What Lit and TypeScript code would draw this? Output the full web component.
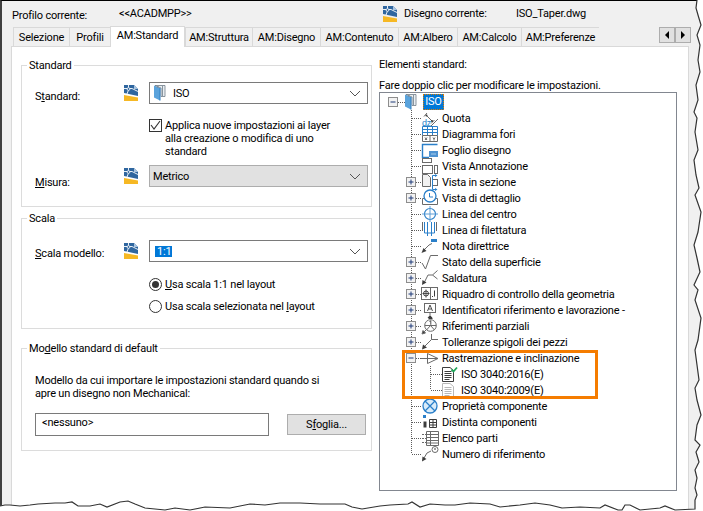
import { LitElement, html, css, svg } from "lit";
import { customElement } from "lit/decorators.js";

const B = "#2a7fc9";
const G = "#6a6a6a";
const D = "#3c3c3c";

const layerIcon = html`<svg class="layer" width="14" height="16" viewBox="0 0 14 16">
  <path d="M0 0H10L14 4V11L0 8Z" fill="#2f669f"/>
  <path d="M0 10L14 12.5V16H0Z" fill="#f6b824"/>
  <path d="M4.5 0V5M0 3.5H8L14 6.5M4.5 5L3 9" stroke="#fff" stroke-width=".9" fill="none"/>
  <circle cx="4.5" cy="4" r="1.4" fill="#2f669f" stroke="#fff" stroke-width=".8"/>
  <path d="M10 0V4H14Z" fill="#a9c4df"/>
</svg>`;

const bookIcon = (w = 12, h = 16) => html`<svg class="book" width=${w} height=${h} viewBox="0 0 12 16">
  <path d="M0 .5L6 3V15.5L0 12.5Z" fill="#5aa3dc"/>
  <path d="M1 .5H11V11.5H7V3Z" fill="#e9eef2" stroke="#6f7c88" stroke-width=".8"/>
  <path d="M4 1V3M8.5 1V11" stroke="#6f7c88" stroke-width=".8"/>
  <path d="M6 3V15.5" stroke="#2f7fc1" stroke-width="1"/>
</svg>`;

const doc = (c: string, check: boolean) => svg`
  <path d="M.5 1.5H8L11.5 4.5V15.5H.5Z" fill="#fff" stroke=${c}/>
  <path d="M2.5 5.5H9.5M2.5 7.5H9.5M2.5 9.5H9.5M2.5 11.5H9.5M2.5 13.5H7.5" stroke=${c}/>
  ${check ? svg`<path d="M9.5 3.5L11.5 5.5L15 1.5" stroke="#1ea55a" stroke-width="1.8" fill="none"/>` : ""}`;

const icons: Record<string, unknown> = {
  quota: svg`
    <path d="M5 5L12 12" stroke=${G}/><path d="M3 6.5L6 3M10 13.5L13.5 10" stroke=${G}/>
    <circle cx="5.5" cy="5.5" r="1" fill=${D}/><circle cx="11" cy="11" r="1" fill=${D}/>
    <text x="1" y="16" font-size="9" font-family="Liberation Sans, sans-serif" fill=${B}>dz</text>
    <path d="M10 16L17 9" stroke=${G}/>`,
  diagramma: svg`
    <path d="M1.5 .5H16.5V9.5H1.5ZM1.5 3.5H16.5M1.5 6.5H16.5M6.5 .5V9.5M11.5 .5V9.5" stroke=${B} fill="#fff"/>
    <path d="M1.5 9.5H16.5V15.5H1.5ZM9 9.5V15.5" stroke=${G} fill="#fff"/>
    <path d="M4 11.5L6 14M6 11.5L4 14M12 11.5L13 13L14 11.5M13 13V14.5" stroke=${D} stroke-width=".8" fill="none"/>`,
  foglio: svg`
    <path d="M16.5 2.5H1.5V15.5H8" stroke=${B} fill="none" stroke-width="1.4"/>
    <rect x="8" y="9" width="9" height="6" fill="#4f93d2"/>
    <path d="M10 12H15" stroke="#a9cdea"/>`,
  annotazione: svg`
    <rect x="1.5" y=".5" width="9" height="4" fill="#fff" stroke=${G}/>
    <rect x="1.5" y="7.5" width="10" height="8" fill="#fff" stroke=${G}/>
    <rect x="13.5" y="7.5" width="3" height="8" fill="#fff" stroke=${G}/>`,
  sezione: svg`
    <path d="M1.5 .5H6.5L9.5 3.5V12.5H1.5Z" fill="#f1f1f1" stroke=${G}/>
    <rect x="11.5" y="5.5" width="5" height="6" fill="#fff" stroke=${G}/>
    <path d="M14.5 1.5H11.5V15.5H14.5" stroke=${B} fill="none"/><path d="M14 0V3L16.5 1.5Z M14 14V17L16.5 15.5Z" fill=${B}/>`,
  dettaglio: svg`
    <path d="M3.5 8.5H1.5V14.5H16.5V8.5H14" stroke=${G} fill="none"/>
    <circle cx="9" cy="6" r="6" fill="#fff" stroke=${B} stroke-width="1.3"/>
    <path d="M8.5 3V7H12" stroke=${B} fill="none"/>`,
  centro: svg`
    <circle cx="9" cy="8" r="5.5" fill="#fff" stroke=${B} stroke-width="1.2"/>
    <path d="M9 0V16M1 8H17" stroke="#5e9ed6"/>`,
  filettatura: svg`
    <path d="M3.5 0V11H13.5V0" stroke=${B} fill="none"/>
    <path d="M6.5 0V14M10.5 0V14" stroke=${B}/>
    <path d="M1.5 0V9M15.5 0V9" stroke=${G}/>`,
  nota: svg`
    <rect x="10" y="1" width="6" height="3" fill=${B}/>
    <path d="M2 13L8 7L11 5.5" stroke=${G} fill="none"/>
    <path d="M0.5 15L2.5 10L5.5 13Z" fill=${D}/>`,
  stato: svg`<path d="M1 9L4.5 15L9.5 1.5H17" stroke=${G} fill="none"/>`,
  saldatura: svg`
    <path d="M3 13L7 5H11.5M16.5 .5L11.5 5L16.5 9" stroke=${G} fill="none"/>
    <path d="M1 15L1.5 10L5.5 12.5Z" fill=${D}/>`,
  riquadro: svg`
    <rect x=".5" y="1.5" width="16" height="12" fill="#fff" stroke=${G}/>
    <path d="M9.5 1.5V13.5" stroke=${G}/>
    <circle cx="5" cy="7.5" r="2.5" fill="none" stroke=${D}/>
    <path d="M5 3.5V11.5M1.5 7.5H8.5" stroke=${D} stroke-width=".9"/>
    <path d="M13.5 4.5V10.5" stroke=${D}/><rect x="11" y="10" width="1" height="1" fill=${D}/>`,
  identificatori: svg`
    <rect x="3.5" y="1.5" width="11" height="9" fill="#fff" stroke=${G}/>
    <path d="M6.5 9L9 3L11.5 9M7.5 7H10.5" stroke=${D} stroke-width=".9" fill="none"/>
    <path d="M9 10.5V13" stroke=${G}/><path d="M6.5 16L9 13L11.5 16Z" fill=${D}/>`,
  riferimenti: svg`
    <circle cx="9.5" cy="7.5" r="5.8" fill="#fff" stroke=${G}/>
    <path d="M3.8 7.5H15.3M9.5 7.5L5.5 12M9.5 7.5L13.5 12" stroke=${G}/>
    <path d="M8.5 3.5L9.8 2.8V6.8" stroke=${D} fill="none" stroke-width=".9"/>
    <path d="M7 1L9.5 -1.5L12 1Z" fill=${D}/>
    <path d="M1 16L2 12.5L4.5 15Z M3 14L5.5 11.5" fill=${D} stroke=${G}/>`,
  tolleranze: svg`
    <path d="M10.5 0V5.5H17M10.5 5.5L4 12" stroke=${G} fill="none"/>
    <path d="M1 15.5L2 10.5L6 13.5Z" fill=${D}/>`,
  rastremazione: svg`
    <path d="M0 8.5H17M6.5 3.5L17 8.5L6.5 13.5Z" stroke=${G} fill="#fff"/>
    <path d="M0 8.5H6" stroke=${G}/>`,
  doc1: doc(D, true),
  doc2: doc("#b8b8b8", false),
  proprieta: svg`
    <circle cx="9" cy="8" r="7" fill="#d9ecfa" stroke=${B} stroke-width="1.3"/>
    <path d="M4 3L14 13M14 3L4 13" stroke=${B} stroke-width="1.3"/>`,
  distinta: svg`
    <rect x="2" y="1" width="3" height="3" fill=${B}/>
    <path d="M2.5 7.5H5.5V13.5H2.5Z" fill=${D}/>
    <path d="M8.5 5.5H15.5V13.5H8.5ZM8.5 8.5H15.5M8.5 11H15.5M12 5.5V13.5" stroke=${D} fill="#fff"/>`,
  elenco: svg`
    <path d="M5.5 1.5H17.5V15.5H5.5ZM5.5 4.5H17.5M5.5 7.5H17.5M5.5 10.5H17.5M5.5 13H17.5M9.5 1.5V15.5" stroke=${G} fill="#fff"/>
    <path d="M1 4.5H5M1 8.5H5M1 12.5H5" stroke=${G} stroke-dasharray="2 1"/>`,
  numero: svg`
    <path d="M3 12L6 7L10 5" stroke=${G} fill="none"/>
    <path d="M1 15.5L1.5 10.5L5.5 13Z" fill=${D}/>
    <circle cx="14" cy="3.5" r="3" fill="#fff" stroke=${G}/>
    <path d="M14 2V4" stroke=${D}/>`,
};

type Row = { level: number; exp?: string; icon: string; text: string; last?: boolean };

const rows: Row[] = [
  { level: 1, icon: "quota", text: "Quota" },
  { level: 1, icon: "diagramma", text: "Diagramma fori" },
  { level: 1, icon: "foglio", text: "Foglio disegno" },
  { level: 1, icon: "annotazione", text: "Vista Annotazione" },
  { level: 1, exp: "+", icon: "sezione", text: "Vista in sezione" },
  { level: 1, exp: "+", icon: "dettaglio", text: "Vista di dettaglio" },
  { level: 1, icon: "centro", text: "Linea del centro" },
  { level: 1, icon: "filettatura", text: "Linea di filettatura" },
  { level: 1, icon: "nota", text: "Nota direttrice" },
  { level: 1, exp: "+", icon: "stato", text: "Stato della superficie" },
  { level: 1, exp: "+", icon: "saldatura", text: "Saldatura" },
  { level: 1, exp: "+", icon: "riquadro", text: "Riquadro di controllo della geometria" },
  { level: 1, exp: "+", icon: "identificatori", text: "Identificatori riferimento e lavorazione -" },
  { level: 1, exp: "+", icon: "riferimenti", text: "Riferimenti parziali" },
  { level: 1, exp: "+", icon: "tolleranze", text: "Tolleranze spigoli dei pezzi" },
  { level: 1, exp: "-", icon: "rastremazione", text: "Rastremazione e inclinazione" },
  { level: 2, icon: "doc1", text: "ISO 3040:2016(E)" },
  { level: 2, icon: "doc2", text: "ISO 3040:2009(E)", last: true },
  { level: 1, icon: "proprieta", text: "Proprietà componente" },
  { level: 1, icon: "distinta", text: "Distinta componenti" },
  { level: 1, icon: "elenco", text: "Elenco parti" },
  { level: 1, icon: "numero", text: "Numero di riferimento", last: true },
];

const tabs: [string, number][] = [
  ["Selezione", 56], ["Profili", 41], ["AM:Standard", 75], ["AM:Struttura", 67], ["AM:Disegno", 68],
  ["AM:Contenuto", 78], ["AM:Albero", 59], ["AM:Calcolo", 64], ["AM:Preferenze", 78],
];

const expander = (x: number, sign: string) => svg`
  <rect x=${x} y="3.5" width="9" height="9" fill="#f2f2f2" stroke="#8d8d8d"/>
  <path d="M${x + 2} 8H${x + 7}" stroke="#1f3a78"/>
  ${sign === "+" ? svg`<path d="M${x + 4.5} 5.5V10.5" stroke="#1f3a78"/>` : ""}`;

const dots = "#5c5c5c";

function connector(r: Row) {
  const w = r.level === 1 ? 41 : 62;
  return html`<svg class="conn" width=${w} height="16" viewBox="0 0 ${w} 16">
    <g stroke=${dots} stroke-dasharray="1 1" fill="none" shape-rendering="crispEdges">
      <path d="M31.5 0V${r.level === 1 && r.last ? 8 : 16}"/>
      ${r.level === 1 ? svg`<path d="M31.5 8H41"/>` : svg`
        <path d="M50.5 0V${r.last ? 8 : 16}"/><path d="M50.5 8H62"/>`}
    </g>
    ${r.exp ? expander(26.5, r.exp) : ""}
  </svg>`;
}

const tornPts = "0,506 5,505 10,505 20,506 30,505 38,504 55,503 65,503 72,502 78,506 90,506 100,504 107,507 120,502 128,501 135,504 145,508 165,510 175,508 190,510 205,507 230,508 250,504 265,505 280,503 300,503 320,504 345,504 352,507 362,509 380,506 390,505 408,504 412,502 420,507 430,504 445,505 455,505 470,503 490,504 500,507 520,505 535,503 550,505 562,508 580,507 600,508 605,505 618,510 622,510 625,505 630,505 640,510 660,508 665,506 675,510 695,509 695,500 697,495 695,488 697,478 695,470 699,462 696,452 700,445 695,440 697,425 701,415 697,400 695,388 699,380 697,365 695,350 698,340 701,318 695,300 698,290 694,285 700,272 697,258 694,245 698,232 701,212 695,195 699,188 696,175 694,160 698,150 695,132 697,118 694,112 698,100 696,85 700,72 698,60 700,45 697,35 701,25 698,15 696,8 697,0";

@customElement("app-root")
export class AppRoot extends LitElement {
  static styles = css`
    :host { display: block; position: relative; width: 703px; height: 511px; overflow: hidden; background: #fff;
      font-family: Roboto, "Open Sans", sans-serif; font-size: 11px; letter-spacing: -0.2px; line-height: 13px; color: #000; }
    * { box-sizing: border-box; }
    svg { display: block; overflow: visible; flex: none; }
    u { text-decoration-thickness: 1px; }
    .dialog { height: 511px; background: #f0f0f0; border-left: 2px solid #404040; border-top: 1px solid #000; display: flex; flex-direction: column; }
    .header { display: flex; align-items: center; height: 25px; padding-left: 10px; flex: none; }
    .hp { width: 107px; padding-top: 3px; }
    .hv { width: 264px; }
    .hi { width: 21px; }
    .hd { width: 112px; }
    .strip { display: flex; height: 20px; flex: none; padding-left: 11px; position: relative; z-index: 1; align-items: flex-end; }
    .tab { height: 19px; border: 1px solid #d9d9d9; border-bottom: none; border-right: none; text-align: center; line-height: 19px; background: #f0f0f0; white-space: nowrap; }
    .tab.active { height: 21px; margin-bottom: -1px; line-height: 17px; background: #fff; border-right: 1px solid #d9d9d9; }
    .spacer { width: 60px; }
    .scroll { display: flex; margin-bottom: 3px; height: 16px; }
    .scroll span { width: 16px; height: 16px; background: #e1e1e1; border: 1px solid #adadad; display: flex; align-items: center; justify-content: center; }
    .arr { width: 0; height: 0; border-top: 4px solid transparent; border-bottom: 4px solid transparent; }
    .arr.l { border-right: 4px solid #000; }
    .arr.r { border-left: 4px solid #000; }
    .panel { flex: 1; margin: 0 0 0 9px; width: 678px; background: #fff; border: 1px solid #d9d9d9; display: grid; grid-template-columns: 358px 298px; padding-left: 9px; min-height: 0; }
    .left { display: flex; flex-direction: column; padding-top: 10px; width: 351px; }
    fieldset { margin: 0; padding: 0 0 0 13px; border: 1px solid #dcdcdc; min-width: 0; flex: none; }
    legend { padding: 1px 2px 0; margin-left: -8px; height: 16px; line-height: 16px; }
    .f1 { height: 150px; padding-top: 9px; }
    .f2 { height: 119px; margin-top: 3px; padding-top: 14px; }
    .f3 { height: 111px; margin-top: 11px; padding-top: 18px; }
    .row { display: grid; grid-template-columns: 89px 25px 219px; align-items: center; }
    .lab3 { margin: 3px 0 -3px; }
    .lab2 { margin: 2px 0 -2px; }
    .lab6 { margin: 6px 0 -6px; }
    .combo { height: 22px; border: 1px solid #7a7a7a; background: #fff; display: flex; align-items: center; position: relative; padding-left: 4px; }
    .combo.grey { background: #e1e1e1; border-color: #adadad; padding-left: 3px; }
    .combo .chev { position: absolute; right: 6px; top: 7px; }
    .combo .txt { margin: 1px 0 0 7px; }
    .sel { background: #0078d7; color: #fff; padding: 0 2px; margin-left: 1px; line-height: 11px; height: 11px; width: 17px; }
    .check { display: flex; margin: 15px 0 0 114px; width: 200px; }
    .box { width: 13px; height: 13px; border: 1px solid #333; background: #fff; flex: none; margin-right: 3px; }
    .misura { margin-top: 7px; }
    .radio { display: flex; align-items: center; height: 13px; margin-left: 114px; }
    .radio.a { margin-top: 16px; }
    .radio.b { margin-top: 9px; }
    .dot { width: 13px; height: 13px; border-radius: 50%; border: 1px solid #333; background: #fff; margin-right: 3px; display: flex; align-items: center; justify-content: center; flex: none; }
    .dot i { width: 7px; height: 7px; border-radius: 50%; background: #333; display: block; }
    .browse { display: flex; margin-top: 13px; align-items: center; }
    .input { width: 234px; height: 23px; border: 1px solid #7a7a7a; background: #fff; padding: 2px 0 0 6px; }
    .btn { width: 79px; height: 21px; margin-left: 18px; background: #e1e1e1; border: 1px solid #adadad; text-align: center; line-height: 20px; }
    .right { display: flex; flex-direction: column; padding-top: 11px; }
    .r1 { height: 14px; }
    .r2 { margin-top: 7px; height: 13px; }
    .tree { width: 298px; height: 399px; border: 1px solid #828790; padding-top: 1px; }
    .tr { display: flex; height: 16px; align-items: center; white-space: nowrap; }
    .ti { width: 18px; height: 16px; flex: none; }
    .tl { margin-left: 3px; }
    .lv2 .ti { width: 16px; }
    .iso { margin-left: 6px; background: #0078d7; color: #fff; width: 21px; height: 16px; line-height: 15px; text-align: center; outline: 1px dotted #e07b00; outline-offset: -1px; }
    .mark { position: absolute; left: 402px; top: 350px; width: 196px; height: 49px; border: 3px solid #f57c00; }
    .torn { position: absolute; left: 0; top: 0; }
  `;

  private chevron() {
    return html`<svg class="chev" width="12" height="7" viewBox="0 0 12 7"><path d="M1 1L6 6L11 1" fill="none" stroke="#555"/></svg>`;
  }

  render() {
    return html`
      <div class="dialog">
        <div class="header">
          <span class="hp">Profilo corrente:</span>
          <span class="hv">&lt;&lt;ACADMPP&gt;&gt;</span>
          <span class="hi">${layerIcon}</span>
          <span class="hd">Disegno corrente:</span>
          <span>ISO_Taper.dwg</span>
        </div>
        <div class="strip">
          ${tabs.map(([t, w], i) => html`<div class="tab ${i === 2 ? "active" : ""}" style="width:${w}px">${t}</div>`)}
          <div class="spacer"></div>
          <div class="scroll"><span><i class="arr l"></i></span><span><i class="arr r"></i></span></div>
        </div>
        <div class="panel">
          <div class="left">
            <fieldset class="f1">
              <legend>Standard</legend>
              <div class="row">
                <span class="lab3">S<u>t</u>andard:</span>${layerIcon}
                <div class="combo">${bookIcon()}<span class="txt">ISO</span>${this.chevron()}</div>
              </div>
              <div class="check">
                <div class="box"><svg width="11" height="11" viewBox="0 0 11 11"><path d="M1 5L4 9L10 1" fill="none" stroke="#333" stroke-width="1.1"/></svg></div>
                <div>Applica nuove impostazioni ai layer<br />alla creazione o modifica di uno<br />standard</div>
              </div>
              <div class="row misura">
                <span class="lab6"><u>M</u>isura:</span>${layerIcon}
                <div class="combo grey"><span>Metrico</span>${this.chevron()}</div>
              </div>
            </fieldset>
            <fieldset class="f2">
              <legend>Scala</legend>
              <div class="row">
                <span class="lab2"><u>S</u>cala modello:</span>${layerIcon}
                <div class="combo"><span class="sel">1:1</span>${this.chevron()}</div>
              </div>
              <div class="radio a"><span class="dot"><i></i></span><span><u>U</u>sa scala 1:1 nel layout</span></div>
              <div class="radio b"><span class="dot"></span><span>Usa scala selezionata nel <u>l</u>ayout</span></div>
            </fieldset>
            <fieldset class="f3">
              <legend>Mo<u>d</u>ello standard di default</legend>
              <div>Modello da cui importare le impostazioni standard quando si<br />apre un disegno non Mechanical:</div>
              <div class="browse">
                <div class="input">&lt;nessuno&gt;</div>
                <div class="btn">S<u>f</u>oglia...</div>
              </div>
            </fieldset>
          </div>
          <div class="right">
            <div class="r1">Elementi standard:</div>
            <div class="r2">Fare doppio clic per modificare le impostazioni.</div>
            <div class="tree">
              <div class="tr">
                <svg class="conn" width="25" height="16" viewBox="0 0 25 16">
                  <path d="M17.5 8H25" stroke=${dots} stroke-dasharray="1 1" shape-rendering="crispEdges"/>
                  ${expander(8.5, "-")}
                </svg>
                ${bookIcon()}<div class="iso">ISO</div>
              </div>
              ${rows.map(r => html`<div class="tr ${r.level === 2 ? "lv2" : ""}">
                ${connector(r)}
                <svg class="ti" viewBox="0 0 ${r.level === 2 ? 16 : 18} 16">${icons[r.icon]}</svg>
                <span class="tl">${r.text}</span>
              </div>`)}
            </div>
          </div>
        </div>
      </div>
      <div class="mark"></div>
      <svg class="torn" width="703" height="511" viewBox="0 0 703 511">
        <path d="M${tornPts} L703,0 L703,511 L0,511 Z" fill="#fff"/>
        <polyline points=${tornPts} fill="none" stroke="#333" stroke-width="1.2"/>
      </svg>
    `;
  }
}
